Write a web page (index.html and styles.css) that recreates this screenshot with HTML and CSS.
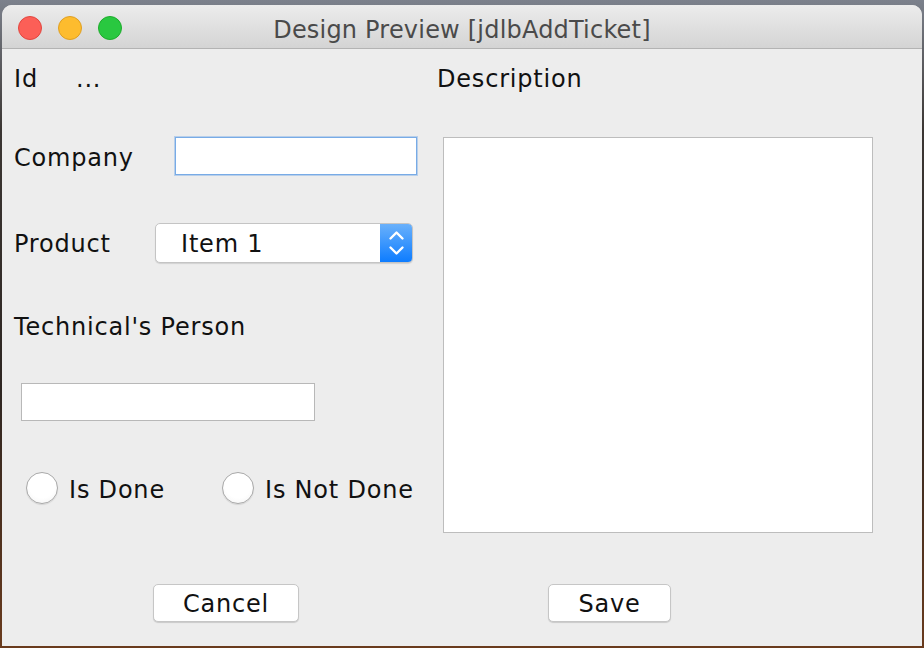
FILE: index.html
```html
<!DOCTYPE html>
<html>
<head>
<meta charset="utf-8">
<link rel="stylesheet" href="styles.css">
</head>
<body>
<div class="window">
  <div class="titlebar">
    <div class="lights">
      <span class="light red"></span>
      <span class="light yellow"></span>
      <span class="light green"></span>
    </div>
    <div class="title">Design Preview [jdlbAddTicket]</div>
    <div></div>
  </div>
  <div class="content">
    <div class="main">
      <div class="left">
        <div class="row id-row"><span class="id-label">Id</span><span>...</span></div>
        <div class="row company-row"><span class="company-label">Company</span><div class="field field-focus"></div></div>
        <div class="row product-row">
          <span class="product-label">Product</span>
          <div class="combo">
            <span class="combo-text">Item 1</span>
            <span class="combo-arrow">
              <svg width="33" height="40" viewBox="0 0 33 40"><polyline points="10.5,15.5 16.5,9.5 22.5,15.5" fill="none" stroke="#fff" stroke-width="2.4" stroke-linecap="round" stroke-linejoin="round"/><polyline points="10.5,24.5 16.5,30.5 22.5,24.5" fill="none" stroke="#fff" stroke-width="2.4" stroke-linecap="round" stroke-linejoin="round"/></svg>
            </span>
          </div>
        </div>
        <div class="row tech-row">Technical's Person</div>
        <div class="field field2"></div>
        <div class="row radio-row">
          <span class="radio-option"><span class="radio"></span><span class="radio-label">Is Done</span></span>
          <span class="radio-option"><span class="radio"></span><span class="radio-label">Is Not Done</span></span>
        </div>
      </div>
      <div class="right">
        <div class="row desc-row">Description</div>
        <div class="desc-box"></div>
      </div>
    </div>
    <div class="actions">
      <button class="btn btn-cancel">Cancel</button>
      <button class="btn btn-save">Save</button>
    </div>
  </div>
</div>
</body>
</html>
```
FILE: styles.css
```css
html, body {
  margin: 0;
  padding: 0;
}
body {
  width: 924px;
  height: 648px;
  overflow: hidden;
  background: linear-gradient(to bottom, #7c818c 0%, #3b3633 20%, #2e2622 60%, #6a3b1d 100%);
  font-family: "DejaVu Sans", sans-serif;
}
.window {
  margin: 5px 2px 0 2px;
  width: 920px;
  height: 641px;
  background: #ededed;
  border-radius: 10px 10px 0 0;
  overflow: hidden;
  display: flex;
  flex-direction: column;
}
.titlebar {
  height: 43px;
  flex: none;
  border-bottom: 1px solid #b3b3b3;
  background: linear-gradient(to bottom, #ececec, #d4d4d4);
  display: grid;
  grid-template-columns: 1fr auto 1fr;
  align-items: center;
}
.lights {
  display: flex;
  gap: 16px;
  padding-left: 16px;
  padding-top: 2px;
}
.light {
  width: 24px;
  height: 24px;
  border-radius: 50%;
  box-sizing: border-box;
}
.red { background: #fc5f57; border: 1px solid #e2463f; }
.yellow { background: #fdbc2e; border: 1px solid #df9f22; }
.green { background: #29c840; border: 1px solid #1dac2b; }
.title {
  font-size: 24px;
  color: #4a4a4a;
  letter-spacing: 0.2px;
  padding-top: 6px;
}
.content {
  flex: 1;
  padding-left: 12px;
  display: flex;
  flex-direction: column;
  font-size: 24px;
  letter-spacing: 0.8px;
  color: #111;
}
.main {
  display: flex;
}
.left {
  width: 423px;
}
.row {
  display: flex;
  align-items: center;
  line-height: 30px;
}
.id-row {
  margin-top: 15px;
  height: 30px;
}
.id-label {
  width: 62px;
}
.company-row {
  margin-top: 43px;
  height: 38px;
}
.company-label {
  width: 161px;
  padding-top: 3px;
}
.field {
  box-sizing: border-box;
  background: #fff;
  height: 38px;
}
.field-focus {
  width: 242px;
  border: 1px solid #78abe6;
  box-shadow: 0 0 0 1px rgba(120, 170, 230, 0.45);
}
.product-row {
  margin-top: 48px;
  height: 40px;
}
.product-label {
  width: 141px;
  padding-top: 2px;
}
.combo {
  width: 258px;
  height: 40px;
  box-sizing: border-box;
  display: flex;
  background: #fff;
  border: 1px solid #c4c4c4;
  border-radius: 5px;
  box-shadow: 0 1px 1px rgba(0, 0, 0, 0.12);
  overflow: hidden;
}
.combo-text {
  flex: 1;
  padding-left: 25px;
  line-height: 38px;
  padding-top: 1px;
}
.combo-arrow {
  width: 33px;
  height: 40px;
  margin-top: -1px;
  margin-right: -1px;
  display: flex;
  background: linear-gradient(to bottom, #6cb2fb, #0b7bff);
}
.tech-row {
  margin-top: 47px;
  height: 30px;
  padding-top: 2px;
}
.field2 {
  margin-top: 41px;
  margin-left: 7px;
  width: 294px;
  border: 1px solid #b8b8b8;
}
.radio-row {
  margin-top: 50px;
  height: 34px;
  padding-left: 12px;
}
.radio-option {
  display: flex;
  align-items: center;
  gap: 11px;
}
.radio-option:first-child {
  width: 196px;
}
.radio-label {
  padding-top: 3px;
}
.radio {
  width: 32px;
  height: 32px;
  box-sizing: border-box;
  border-radius: 50%;
  border: 1px solid #a9a9a9;
  background: radial-gradient(circle at 50% 40%, #ffffff 55%, #f1f1f1 100%);
  box-shadow: 0 1px 1px rgba(0, 0, 0, 0.1);
}
.right {
  display: flex;
  flex-direction: column;
}
.desc-row {
  margin-top: 15px;
  height: 30px;
}
.desc-box {
  margin-top: 43px;
  margin-left: 6px;
  width: 430px;
  height: 396px;
  box-sizing: border-box;
  background: #fff;
  border: 1px solid #bdbdbd;
}
.actions {
  display: flex;
  margin-top: 51px;
}
.btn {
  font-family: "DejaVu Sans", sans-serif;
  font-size: 24px;
  letter-spacing: 0.8px;
  color: #111;
  height: 38px;
  box-sizing: border-box;
  background: #fff;
  border: 1px solid #c6c6c6;
  border-radius: 5px;
  box-shadow: 0 1px 1px rgba(0, 0, 0, 0.15);
  padding: 2px 0 0 0;
  line-height: 34px;
}
.btn-cancel {
  margin-left: 139px;
  width: 146px;
}
.btn-save {
  margin-left: 249px;
  width: 123px;
}
```
